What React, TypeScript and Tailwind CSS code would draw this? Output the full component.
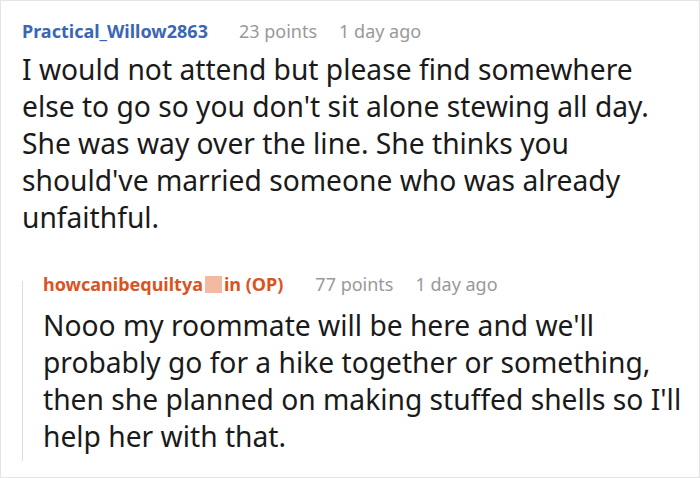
export default function App() {
  return (
    <div
      className="h-[478px] w-[700px] overflow-hidden bg-white"
      style={{ fontFamily: '"Noto Sans", "Open Sans", sans-serif' }}
    >
      <div className="h-[478px] border border-[#e4e4e4] pl-[21px] pr-[12px] pt-[17px]">
        {/* Top-level comment */}
        <div className="flex items-baseline text-[18px] leading-[26px]">
          <span className="font-bold text-[#3a67b5]">Practical_Willow2863</span>
          <span className="ml-[31px] text-[#999]">23 points</span>
          <span className="ml-[22px] text-[#999]">1 day ago</span>
        </div>
        <p className="mr-[4px] mt-[7px] text-[28.2px] leading-[37px] text-[#1a1a1a]">
          I would not attend but please find somewhere else to go so you don't sit alone stewing all day.
          She was way over the line. She thinks you should've married someone who was already unfaithful.
        </p>

        {/* Reply */}
        <div className="mt-[35px] flex">
          <div className="mb-[-6px] mt-[10px] w-px shrink-0 bg-[#dedede]" />
          <div className="pl-[20px]">
            <div className="flex items-baseline text-[18px] leading-[26px]">
              <span className="font-bold text-[#d9541f]">
                howcanibequiltya
                <span className="mx-[2px] inline-block h-[17px] w-[17px] translate-y-[2px] bg-[#f3b9a3]" />
                in (OP)
              </span>
              <span className="ml-[32px] text-[#999]">77 points</span>
              <span className="ml-[22px] text-[#999]">1 day ago</span>
            </div>
            <p className="mt-[10px] text-[28.2px] leading-[37px] text-[#1a1a1a]">
              Nooo my roommate will be here and we'll probably go for a hike together or something, then
              she planned on making stuffed shells so I'll help her with that.
            </p>
          </div>
        </div>
      </div>
    </div>
  );
}
